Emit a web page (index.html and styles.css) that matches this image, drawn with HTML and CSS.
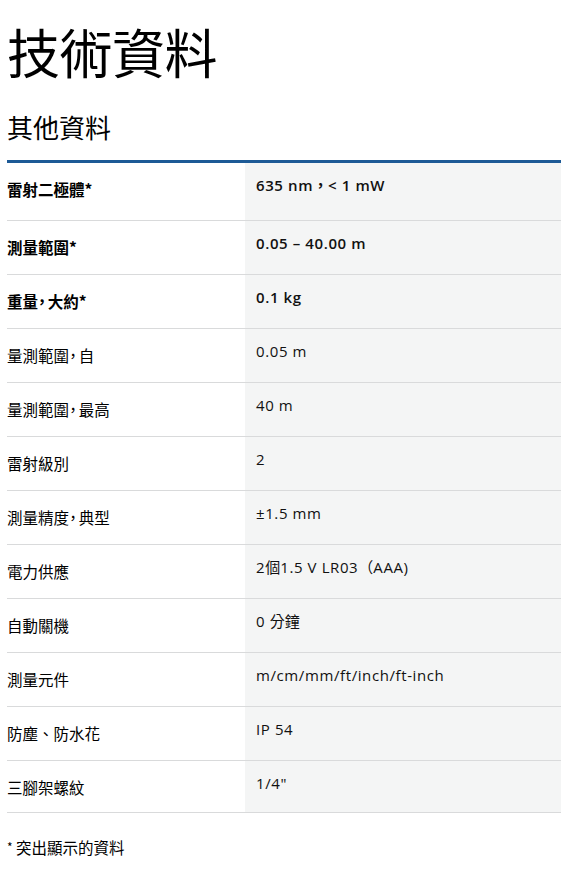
FILE: index.html
```html
<!DOCTYPE html>
<html lang="zh-Hant">
<head>
<meta charset="utf-8">
<link rel="stylesheet" href="styles.css">
</head>
<body>
<main class="page">
  <h1 class="title">技術資料</h1>
  <h2 class="subtitle">其他資料</h2>
  <div class="specs">
    <div class="row first"><div class="label bold">雷射二極體*</div><div class="value bold">635 nm<span class="cjk">，</span>&lt; 1 mW</div></div>
    <div class="row"><div class="label bold">測量範圍*</div><div class="value bold">0.05 – 40.00 m</div></div>
    <div class="row"><div class="label bold">重量<span class="comma">，</span>大約*</div><div class="value bold">0.1 kg</div></div>
    <div class="row"><div class="label">量測範圍<span class="comma">，</span>自</div><div class="value">0.05 m</div></div>
    <div class="row"><div class="label">量測範圍<span class="comma">，</span>最高</div><div class="value">40 m</div></div>
    <div class="row"><div class="label">雷射級別</div><div class="value">2</div></div>
    <div class="row"><div class="label">測量精度<span class="comma">，</span>典型</div><div class="value">±1.5 mm</div></div>
    <div class="row"><div class="label">電力供應</div><div class="value">2<span class="cjk">個</span>1.5 V LR03<span class="cjk">（</span>AAA)</div></div>
    <div class="row"><div class="label">自動關機</div><div class="value">0 <span class="cjk">分鐘</span></div></div>
    <div class="row"><div class="label">測量元件</div><div class="value">m/cm/mm/ft/inch/ft-inch</div></div>
    <div class="row"><div class="label">防塵、防水花</div><div class="value">IP 54</div></div>
    <div class="row last"><div class="label">三腳架螺紋</div><div class="value">1/4"</div></div>
  </div>
  <p class="note"><span class="star">*</span> 突出顯示的資料</p>
</main>
</body>
</html>
```

FILE: styles.css
```css
html, body {
  margin: 0;
  padding: 0;
  background: #ffffff;
}
body {
  font-family: "Noto Sans CJK TC", "Liberation Sans", sans-serif;
  color: #000;
}
.page {
  padding: 0 9px 0 7px;
}
.title {
  margin: 0;
  padding-top: 18px;
  font-size: 53px;
  font-weight: 400;
  line-height: 66px;
  letter-spacing: -0.5px;
}
.subtitle {
  margin: 0;
  padding-top: 27px;
  font-size: 26px;
  font-weight: 400;
  line-height: 32px;
}
.specs {
  margin-top: 17px;
  border-top: 3px solid #1d5a96;
}
.row {
  display: grid;
  grid-template-columns: 238px 1fr;
  height: 54px;
  border-bottom: 1px solid #d9dadb;
  box-sizing: border-box;
}
.row.first {
  height: 58px;
}
.row.last {
  height: 52px;
}
.label {
  font-family: "Noto Sans CJK JP", "Noto Sans CJK TC", sans-serif;
  font-size: 15.5px;
  line-height: 20px;
  padding-top: 16px;
}
.comma {
  font-feature-settings: "halt";
  margin-right: 2px;
}
.value {
  background: #f4f5f5;
  font-family: "Open Sans", "Noto Sans CJK JP", sans-serif;
  font-size: 15px;
  line-height: 20px;
  padding: 12px 0 0 11px;
  letter-spacing: 0.6px;
  color: #111;
}
.cjk {
  font-family: "Noto Sans CJK JP", "Noto Sans CJK TC", sans-serif;
  letter-spacing: 0;
}
.bold {
  font-weight: 700;
}
.value.bold {
  font-weight: 600;
}
.note {
  margin: 24px 0 0;
  font-family: "Noto Sans CJK JP", "Noto Sans CJK TC", sans-serif;
  font-size: 15.5px;
  line-height: 20px;
}
.star {
  font-size: 12px;
  vertical-align: 2px;
}
```
